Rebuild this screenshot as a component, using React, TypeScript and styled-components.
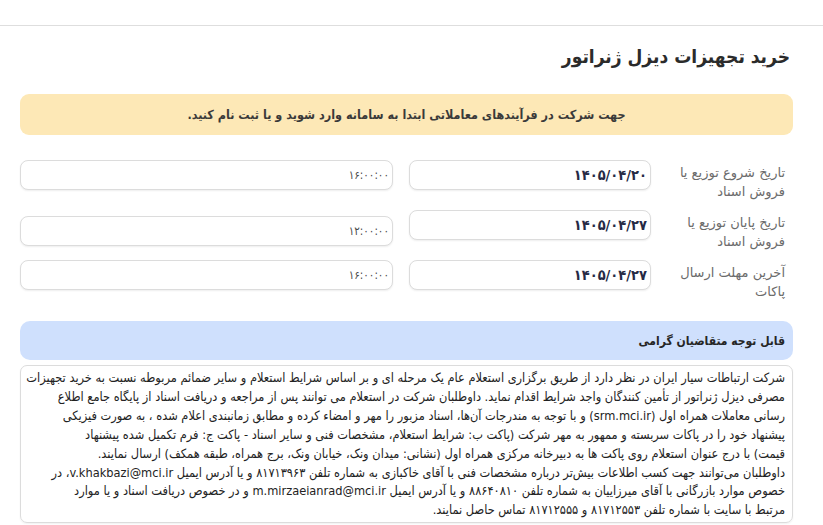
import styled, { createGlobalStyle } from "styled-components";

const GlobalStyle = createGlobalStyle`
  html, body {
    margin: 0;
    padding: 0;
    background: #fff;
  }

  body {
    font-family: "DejaVu Sans Condensed", "DejaVu Sans", sans-serif;
    color: #212529;
  }

  * {
    box-sizing: border-box;
  }
`;

const Page = styled.div`
  direction: rtl;
  width: 823px;
  min-height: 525px;
  overflow: hidden;
`;

const TopBar = styled.header`
  height: 26px;
  border-bottom: 1px solid #dedede;
`;

// physical padding: more room on the right than on the left
const Container = styled.main`
  padding: 0 30px 0 20px;
`;

const Title = styled.h1`
  margin: 0;
  padding: 19px 3px 0 0;
  height: 68px;
  font-size: 19px;
  font-weight: 700;
  color: #2b2b2b;
`;

const Alert = styled.div`
  height: 41px;
  display: flex;
  align-items: center;
  justify-content: center;
  background: #fde8b6;
  border-radius: 9px;
  font-size: 12.5px;
  font-weight: 700;
  color: #3a3a3a;
`;

const Form = styled.section`
  margin-top: 25px;
  display: flex;
  flex-direction: column;
`;

const Row = styled.div`
  display: grid;
  grid-template-columns: 126px 242px minmax(0, 1fr);
  column-gap: 16px;
  height: 50px;
`;

const Label = styled.label`
  padding: 4px 8px 0 0;
  font-family: "DejaVu Sans", sans-serif;
  font-size: 13px;
  line-height: 18.5px;
  color: #6b6b6b;
`;

const Field = styled.div<{ $drop?: number }>`
  height: 30px;
  margin-top: ${(p) => p.$drop ?? 0}px;
  display: flex;
  align-items: center;
  padding: 0 3px;
  border: 1px solid #dcdcdc;
  border-radius: 8px;
  background: #fff;
  box-shadow: 0 1px 2px rgba(0, 0, 0, 0.07);
`;

const DateValue = styled.span`
  font-size: 14.5px;
  font-weight: 700;
  letter-spacing: 3.5px;
  color: #262a45;
`;

const TimeValue = styled.span`
  font-size: 11.5px;
  letter-spacing: 0.4px;
  color: #4a4a4a;
`;

const Notice = styled.section`
  margin-top: 11px;
`;

const NoticeHead = styled.div`
  height: 39px;
  display: flex;
  align-items: center;
  padding-right: 8px;
  background: #cfe0fd;
  border-radius: 10px;
  font-size: 12px;
  font-weight: 700;
  color: #262626;
`;

const NoticeBody = styled.div`
  margin-top: 5px;
  height: 158px;
  padding: 3px 7px 4px 6px;
  border: 1px solid #dcdcdc;
  border-radius: 7px;
  box-shadow: 0 1px 2px rgba(0, 0, 0, 0.06);
  font-size: 12.7px;
  line-height: 18.9px;
  color: #222;
  overflow: hidden;
`;

const Line = styled.span`
  display: block;
  white-space: nowrap;
`;

const fields = [
  { label: "تاریخ شروع توزیع یا فروش اسناد", date: "۱۴۰۵/۰۴/۲۰", time: "۱۶:۰۰:۰۰", drop: 0 },
  { label: "تاریخ پایان توزیع یا فروش اسناد", date: "۱۴۰۵/۰۴/۲۷", time: "۱۲:۰۰:۰۰", drop: 6 },
  { label: "آخرین مهلت ارسال پاکات", date: "۱۴۰۵/۰۴/۲۷", time: "۱۶:۰۰:۰۰", drop: 0 },
];

const noticeLines = [
  "شرکت ارتباطات سیار ایران در نظر دارد از طریق برگزاری استعلام عام یک مرحله ای و بر اساس شرایط استعلام و سایر ضمائم مربوطه نسبت به خرید تجهیزات",
  "مصرفی دیزل ژنراتور از تأمین کنندگان واجد شرایط اقدام نماید. داوطلبان شرکت در استعلام می توانند پس از مراجعه و دریافت اسناد از پایگاه جامع اطلاع",
  "رسانی معاملات همراه اول (srm.mci.ir) و با توجه به مندرجات آن‌ها، اسناد مزبور را مهر و امضاء کرده و مطابق زمانبندی اعلام شده ، به صورت فیزیکی",
  "پیشنهاد خود را در پاکات سربسته و ممهور به مهر شرکت (پاکت ب: شرایط استعلام، مشخصات فنی و سایر اسناد - پاکت ج: فرم تکمیل شده پیشنهاد",
  "قیمت) با درج عنوان استعلام روی پاکت ها به دبیرخانه مرکزی همراه اول (نشانی: میدان ونک، خیابان ونک، برج همراه، طبقه همکف) ارسال نمایند.",
  "داوطلبان می‌توانند جهت کسب اطلاعات بیش‌تر درباره مشخصات فنی با آقای خاکبازی به شماره تلفن ۸۱۷۱۳۹۶۳ و یا آدرس ایمیل v.khakbazi@mci.ir، در",
  "خصوص موارد بازرگانی با آقای میرزاییان به شماره تلفن ۸۸۶۴۰۸۱۰ و یا آدرس ایمیل m.mirzaeianrad@mci.ir و در خصوص دریافت اسناد و یا موارد",
  "مرتبط با سایت با شماره تلفن ۸۱۷۱۲۵۵۳ و ۸۱۷۱۲۵۵۵ تماس حاصل نمایند.",
];

export default function App() {
  return (
    <>
      <GlobalStyle />
      <Page>
        <TopBar />
        <Container>
          <Title>خرید تجهیزات دیزل ژنراتور</Title>
          <Alert>جهت شرکت در فرآیندهای معاملاتی ابتدا به سامانه وارد شوید و یا ثبت نام کنید.</Alert>

          <Form>
            {fields.map((f) => (
              <Row key={f.label}>
                <Label>{f.label}</Label>
                <Field>
                  <DateValue>{f.date}</DateValue>
                </Field>
                <Field $drop={f.drop}>
                  <TimeValue>{f.time}</TimeValue>
                </Field>
              </Row>
            ))}
          </Form>

          <Notice>
            <NoticeHead>قابل توجه متقاضیان گرامی</NoticeHead>
            <NoticeBody>
              {noticeLines.map((line, i) => (
                <Line key={i}>{line}</Line>
              ))}
            </NoticeBody>
          </Notice>
        </Container>
      </Page>
    </>
  );
}
